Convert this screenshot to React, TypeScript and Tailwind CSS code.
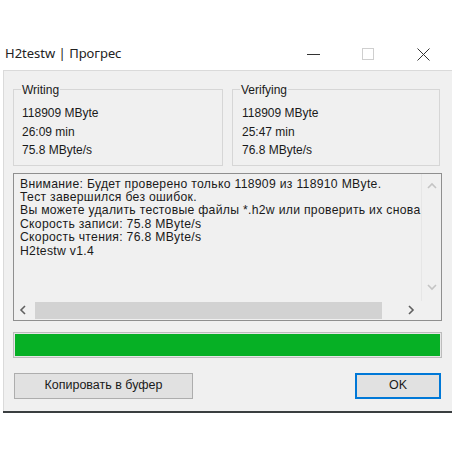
import React from "react";

// ─── Data ────────────────────────────────────────────────────────────────────

const WRITING = ["118909 MByte", "26:09 min", "75.8 MByte/s"];
const VERIFYING = ["118909 MByte", "25:47 min", "76.8 MByte/s"];

const LOG = [
  "Внимание: Будет проверено только 118909 из 118910 MByte.",
  "Тест завершился без ошибок.",
  "Вы можете удалить тестовые файлы *.h2w или проверить их снова.",
  "Скорость записи: 75.8 MByte/s",
  "Скорость чтения: 76.8 MByte/s",
  "H2testw v1.4",
];

// ─── Pieces ──────────────────────────────────────────────────────────────────

function GroupBox({ title, lines, className }: { title: string; lines: string[]; className: string }) {
  return (
    <div className={`relative border border-[#d6d6d6] pt-[14px] pb-[5px] ${className}`}>
      <span className="absolute -top-[9px] left-[7px] bg-[#f0f0f0] px-[1px] leading-[18px]">{title}</span>
      {lines.map((l) => (
        <div key={l} className="leading-[18.5px]">
          {l}
        </div>
      ))}
    </div>
  );
}

const Chevron = ({ dir, color }: { dir: "up" | "down" | "left" | "right"; color: string }) => {
  const d = {
    up: "M1 6l4-4 4 4",
    down: "M1 2l4 4 4-4",
    left: "M6 1L2 5l4 4",
    right: "M3 1l4 4-4 4",
  }[dir];
  return (
    <svg width="10" height="10" viewBox="0 0 10 10" fill="none">
      <path d={d} stroke={color} strokeWidth="1.6" />
    </svg>
  );
};

// ─── App ─────────────────────────────────────────────────────────────────────

export default function App() {
  return (
    <div className="w-[452px] h-[452px] bg-white overflow-hidden pt-[38px] text-[#1a1a1a]">
      {/* Title bar */}
      <div className="h-8 flex items-center pl-[5px] pr-[22px]" style={{ fontFamily: '"Segoe UI", "Noto Sans", sans-serif' }}>
        <span className="text-[13px] text-[#222]">H2testw | Прогрес</span>
        <div className="ml-auto flex items-center">
          <svg width="14" height="12" viewBox="0 0 14 12" className="mr-[41px]">
            <path d="M0 6.5h13" stroke="#333" strokeWidth="1" />
          </svg>
          <svg width="12" height="12" viewBox="0 0 12 12" className="mr-[43px]">
            <rect x="0.5" y="0.5" width="11" height="11" fill="none" stroke="#cfcfcf" />
          </svg>
          <svg width="13" height="13" viewBox="0 0 13 13">
            <path d="M0.5 0.5l12 12M12.5 0.5l-12 12" stroke="#333" strokeWidth="1" />
          </svg>
        </div>
      </div>

      {/* Client area */}
      <div
        className="ml-[3px] h-[341px] bg-[#f0f0f0] border-t border-l border-[#dadada] pl-[9px] pr-[10px] pt-[18px] text-[12px]"
        style={{ fontFamily: '"Liberation Sans", Arial, sans-serif' }}
      >
        <div className="flex gap-[9px] pr-[1px]">
          <GroupBox title="Writing" lines={WRITING} className="w-[210px] pl-[8px]" />
          <GroupBox title="Verifying" lines={VERIFYING} className="w-[208px] pl-[9px]" />
        </div>

        {/* Log memo */}
        <div className="mt-[7px] h-[148px] border border-[#8f8f8f] flex flex-col">
          <div className="flex flex-1 min-h-0">
            <div className="flex-1 overflow-hidden pl-[6px] pt-[4px] whitespace-nowrap text-[12.2px] tracking-[0.3px] leading-[13.4px]">
              {LOG.map((l) => (
                <div key={l}>{l}</div>
              ))}
            </div>
            <div className="w-[20px] flex flex-col items-center justify-between py-[8px] border-l border-[#e6e6e6]">
              <Chevron dir="up" color="#c4c4c4" />
              <Chevron dir="down" color="#c4c4c4" />
            </div>
          </div>
          <div className="h-[19px] flex">
            <div className="flex-1 flex items-center">
              <div className="w-[20px] flex justify-center">
                <Chevron dir="left" color="#606060" />
              </div>
              <div className="ml-[1px] w-[347px] h-[17px] bg-[#d2d2d2]" />
              <div className="ml-auto w-[20px] flex justify-center">
                <Chevron dir="right" color="#606060" />
              </div>
            </div>
            <div className="w-[20px] bg-[#f0f0f0]" />
          </div>
        </div>

        {/* Progress */}
        <div className="mt-[11px] h-[26px] border border-[#bcbcbc] bg-[#e6e6e6] p-[1px]">
          <div className="h-full w-full bg-[#06b025]" />
        </div>

        {/* Buttons */}
        <div className="mt-[15px] flex items-center justify-between pl-[1px] pr-[1px]">
          <button className="w-[179px] h-[26px] bg-[#e1e1e1] border border-[#adadad] text-[12.5px]">
            Копировать в буфер
          </button>
          <button className="w-[86px] h-[26px] bg-[#e1e1e1] border-2 border-[#0078d7] text-[12.5px]">
            OK
          </button>
        </div>
      </div>
      <div className="ml-[3px] h-[2px] bg-[#3a3e40]" />
    </div>
  );
}
